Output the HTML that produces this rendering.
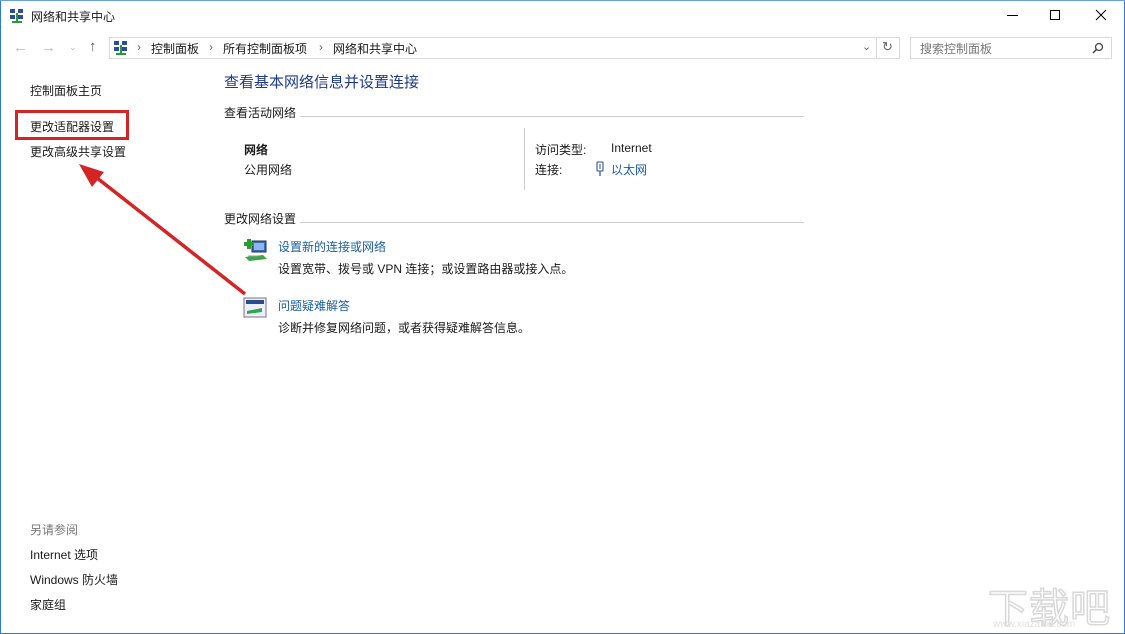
<!DOCTYPE html>
<html><head><meta charset="utf-8"><style>
*{margin:0;padding:0;box-sizing:border-box}
body{width:1125px;height:634px;background:#fff;position:relative;overflow:hidden;font-family:"Liberation Sans","Noto Sans CJK SC",sans-serif;font-size:12px;color:#1a1a1a}
.a{position:absolute;white-space:nowrap}
.link{color:#1a5fa0}
.bd{position:absolute;background:#2b7bd0}
.ic{position:absolute}
</style></head><body>
<div class="bd" style="left:0;top:0;width:1px;height:634px"></div>
<div class="bd" style="right:0;top:0;width:1px;height:634px"></div>
<div class="bd" style="left:0;bottom:0;width:1125px;height:1px"></div>
<div class="bd" style="left:0;top:0;width:1125px;height:1px;background:#6aa0d8"></div>

<svg class="ic" style="left:9px;top:8px" width="16" height="16"><rect x="1" y="1" width="5" height="4" fill="#2a4f9a"/><rect x="9" y="1" width="5" height="4" fill="#2a4f9a"/><rect x="1" y="7" width="5" height="4" fill="#2a4f9a"/><rect x="9" y="7" width="5" height="4" fill="#2a4f9a"/><rect x="7" y="5" width="2" height="9" fill="#2a9a3a"/><rect x="3" y="13" width="10" height="2" fill="#2a9a3a"/></svg>
<div class="a" style="left:31px;top:8px;font-size:12px">网络和共享中心</div>
<div class="a" style="left:1007px;top:15px;width:11px;height:1px;background:#000"></div>
<div class="a" style="left:1050px;top:10px;width:10px;height:10px;border:1px solid #000"></div>
<svg class="ic" style="left:1095px;top:9px" width="12" height="12"><path d="M1 1L11 11M11 1L1 11" stroke="#000" stroke-width="1"/></svg>

<div class="a" style="left:13px;top:39px;color:#bbb;font-size:15px">←</div>
<div class="a" style="left:41px;top:39px;color:#bbb;font-size:15px">→</div>
<div class="a" style="left:69px;top:42px;color:#bbb;font-size:9px">⌄</div>
<div class="a" style="left:89px;top:38px;color:#555;font-size:15px">↑</div>
<div class="a" style="left:109px;top:37px;width:768px;height:22px;border:1px solid #d9d9d9"></div>
<div class="a" style="left:876px;top:37px;width:24px;height:22px;border:1px solid #d9d9d9"></div>
<svg class="ic" style="left:113px;top:40px" width="16" height="16"><rect x="1" y="1" width="5" height="4" fill="#2a4f9a"/><rect x="9" y="1" width="5" height="4" fill="#2a4f9a"/><rect x="1" y="7" width="5" height="4" fill="#2a4f9a"/><rect x="9" y="7" width="5" height="4" fill="#2a4f9a"/><rect x="7" y="5" width="2" height="9" fill="#2a9a3a"/><rect x="3" y="13" width="10" height="2" fill="#2a9a3a"/></svg>
<div class="a" style="left:137px;top:40px;color:#666">›</div>
<div class="a" style="left:151px;top:40px">控制面板</div>
<div class="a" style="left:209px;top:40px;color:#666">›</div>
<div class="a" style="left:223px;top:40px">所有控制面板项</div>
<div class="a" style="left:319px;top:40px;color:#666">›</div>
<div class="a" style="left:333px;top:40px">网络和共享中心</div>
<div class="a" style="left:862px;top:40px;color:#666;font-size:11px">⌄</div>
<div class="a" style="left:882px;top:39px;color:#666;font-size:13px">↻</div>
<div class="a" style="left:910px;top:37px;width:202px;height:22px;border:1px solid #d9d9d9"></div>
<div class="a" style="left:920px;top:40px;color:#777">搜索控制面板</div>
<svg class="ic" style="left:1092px;top:42px" width="12" height="12"><circle cx="7" cy="5" r="3.5" stroke="#444" fill="none" stroke-width="1.3"/><path d="M4.5 7.5L1 11" stroke="#444" stroke-width="1.5"/></svg>

<div class="a" style="left:30px;top:82px">控制面板主页</div>
<div class="a" style="left:30px;top:118px">更改适配器设置</div>
<div class="a" style="left:15px;top:110px;width:114px;height:30px;border:3px solid #d42424"></div>
<div class="a" style="left:30px;top:143px">更改高级共享设置</div>
<div class="a" style="left:30px;top:521px;color:#777">另请参阅</div>
<div class="a" style="left:30px;top:546px">Internet 选项</div>
<div class="a" style="left:30px;top:571px">Windows 防火墙</div>
<div class="a" style="left:30px;top:596px">家庭组</div>

<div class="a" style="left:224px;top:71px;font-size:15px;color:#1e3a8a">查看基本网络信息并设置连接</div>
<div class="a" style="left:224px;top:104px">查看活动网络</div>
<div class="a" style="left:300px;top:116px;width:504px;height:1px;background:#ccc"></div>
<div class="a" style="left:244px;top:141px;font-weight:bold">网络</div>
<div class="a" style="left:244px;top:161px">公用网络</div>
<div class="a" style="left:524px;top:128px;width:1px;height:62px;background:#ccc"></div>
<div class="a" style="left:535px;top:141px">访问类型:</div>
<div class="a" style="left:611px;top:141px">Internet</div>
<div class="a" style="left:535px;top:161px">连接:</div>
<svg class="ic" style="left:595px;top:161px" width="10" height="16"><rect x="2" y="1" width="6" height="9" rx="1" fill="none" stroke="#4a6fa8" stroke-width="1.3"/><rect x="4" y="3" width="2" height="5" fill="#9ab"/><path d="M5 10V15" stroke="#4a6fa8" stroke-width="1.5"/></svg>
<div class="a link" style="left:611px;top:161px">以太网</div>
<div class="a" style="left:224px;top:210px">更改网络设置</div>
<div class="a" style="left:300px;top:222px;width:504px;height:1px;background:#ccc"></div>

<svg class="ic" style="left:243px;top:237px" width="26" height="26"><rect x="9" y="4" width="14" height="11" fill="#3a6cc0" stroke="#234" stroke-width="1"/><rect x="11" y="6" width="10" height="7" fill="#8fb6ec"/><path d="M1 7h10M6 2v10" stroke="#2e9c2e" stroke-width="4"/><path d="M2 20L20 18L24 22L6 24Z" fill="#3aa84a"/><path d="M5 19h10" stroke="#999" stroke-width="1"/></svg>
<div class="a link" style="left:278px;top:238px">设置新的连接或网络</div>
<div class="a" style="left:278px;top:260px">设置宽带、拨号或 VPN 连接；或设置路由器或接入点。</div>

<svg class="ic" style="left:243px;top:297px" width="24" height="22"><rect x="1" y="1" width="22" height="19" fill="#eef" stroke="#777" stroke-width="1"/><rect x="3" y="3" width="18" height="4" fill="#2b4c8c"/><path d="M4 14L19 11L19 15L4 17Z" fill="#2ea84a"/></svg>
<div class="a link" style="left:278px;top:297px">问题疑难解答</div>
<div class="a" style="left:278px;top:319px">诊断并修复网络问题，或者获得疑难解答信息。</div>

<svg class="ic" style="left:0;top:0" width="300" height="320"><path d="M245 294L92 174" stroke="#d42424" stroke-width="3.5"/><path d="M79 164L104 172L92 187Z" fill="#d42424"/></svg>

<div class="a" style="left:988px;top:576px;font-size:40px;color:#fff;-webkit-text-stroke:1.5px #d8d8d8;letter-spacing:1px">下载吧</div>
<div class="a" style="left:993px;top:619px;font-size:10px;color:#e0e0e0">www.xiazaiba.com</div>
</body></html>
